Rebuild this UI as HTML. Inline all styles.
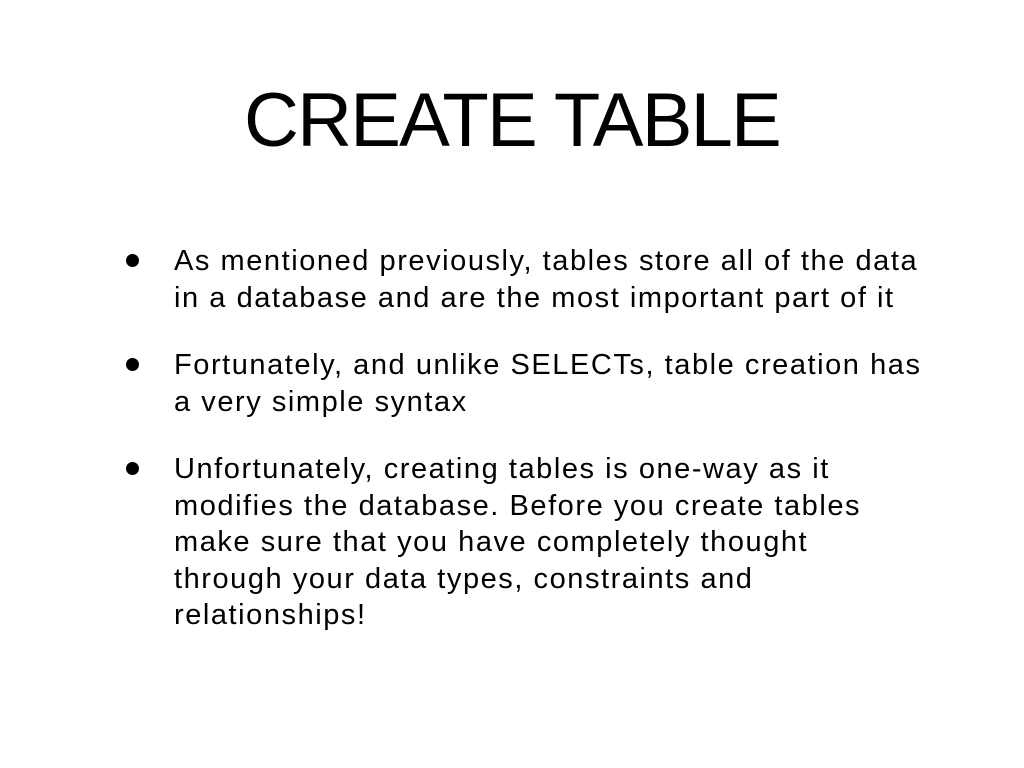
<!DOCTYPE html>
<html><head><style>
body{margin:0;width:1024px;height:768px;background:#fff;font-family:"Liberation Sans",sans-serif;color:#000;position:relative;overflow:hidden}
h1{position:absolute;top:76px;left:0;width:1024px;text-align:center;margin:0;font-weight:normal;font-size:76px;line-height:90px;letter-spacing:-1.8px}
.b{position:absolute;left:174px;font-size:29px;line-height:36.5px;width:850px;letter-spacing:1.55px;white-space:nowrap}
.d{position:absolute;left:126px;width:13px;height:13px;border-radius:50%;background:#000}
</style></head><body>
<h1>CREATE TABLE</h1>
<div class="d" style="top:254px"></div>
<div class="b" style="top:243px">As mentioned previously, tables store all of the data<br>in a database and are the most important part of it</div>
<div class="d" style="top:358px"></div>
<div class="b" style="top:347px">Fortunately, and unlike SELECTs, table creation has<br>a very simple syntax</div>
<div class="d" style="top:462px"></div>
<div class="b" style="top:451px">Unfortunately, creating tables is one-way as it<br>modifies the database. Before you create tables<br>make sure that you have completely thought<br>through your data types, constraints and<br>relationships!</div>
</body></html>
